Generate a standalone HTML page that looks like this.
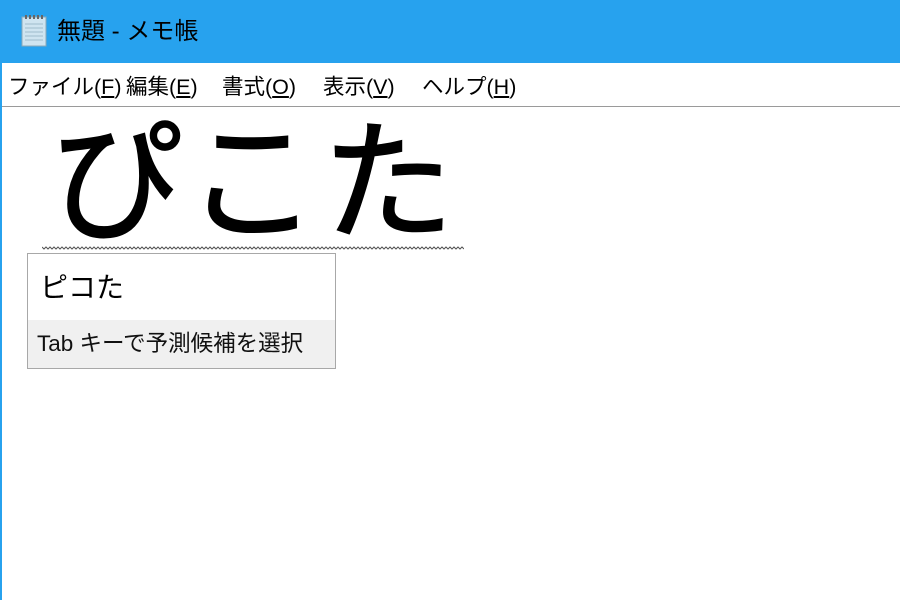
<!DOCTYPE html>
<html><head><meta charset="utf-8"><style>
html,body{margin:0;padding:0;width:900px;height:600px;overflow:hidden;background:#fff;font-family:"Liberation Sans","Noto Sans CJK JP",sans-serif;}
.title{position:absolute;left:0;top:0;width:900px;height:63px;background:#27a2ee;}
.title .t{position:absolute;left:57px;top:16px;font-size:24px;color:#000;line-height:32px;}
.menu{position:absolute;left:0;top:63px;width:900px;height:43px;background:#fff;border-bottom:1px solid #9a9a9a;}
.menu span{position:absolute;top:9px;font-size:21.5px;line-height:30px;color:#000;white-space:nowrap;}
.edge{position:absolute;left:0;top:63px;width:2px;height:537px;background:#27a2ee;}
.big{position:absolute;left:50px;top:104px;font-size:132px;line-height:160px;letter-spacing:4px;color:#000;font-weight:normal;-webkit-text-stroke:1.5px #000;white-space:nowrap;}
.wave{position:absolute;left:42px;top:246px;width:422px;height:4px;}
.pop{position:absolute;left:27px;top:253px;width:307px;height:114px;border:1px solid #a8a8a8;background:#fff;}
.pop .c{position:absolute;left:12px;top:16px;font-size:28px;line-height:36px;}
.pop .h{position:absolute;left:0;top:66px;width:307px;height:48px;background:#f0f0f0;}
.pop .h span{position:absolute;left:9px;top:9px;font-size:22.5px;line-height:30px;color:#111;white-space:nowrap;}
</style></head><body>
<div class="title">
<svg style="position:absolute;left:17px;top:14px" width="34" height="34" viewBox="0 0 34 34">
<rect x="5" y="3" width="24" height="29" fill="#cfe4f0" stroke="#8aa8b8"/>
<g stroke="#9fbccc"><line x1="8" y1="10" x2="26" y2="10"/><line x1="8" y1="14" x2="26" y2="14"/><line x1="8" y1="18" x2="26" y2="18"/><line x1="8" y1="22" x2="26" y2="22"/><line x1="8" y1="26" x2="26" y2="26"/></g>
<g fill="#666"><rect x="8" y="1" width="2" height="4"/><rect x="12" y="1" width="2" height="4"/><rect x="16" y="1" width="2" height="4"/><rect x="20" y="1" width="2" height="4"/><rect x="24" y="1" width="2" height="4"/></g>
</svg>
<div class="t">無題 - メモ帳</div></div>
<div class="menu">
<span style="left:8px">ファイル(<u>F</u>)</span>
<span style="left:126px">編集(<u>E</u>)</span>
<span style="left:222px">書式(<u>O</u>)</span>
<span style="left:323px">表示(<u>V</u>)</span>
<span style="left:422px">ヘルプ(<u>H</u>)</span>
</div>
<div class="edge"></div>
<div class="big">ぴこた</div>
<svg class="wave" viewBox="0 0 422 4" preserveAspectRatio="none"><polyline fill="none" stroke="#555" stroke-width="1" points="0,1 2,3 4,1 6,3 8,1 10,3 12,1 14,3 16,1 18,3 20,1 22,3 24,1 26,3 28,1 30,3 32,1 34,3 36,1 38,3 40,1 42,3 44,1 46,3 48,1 50,3 52,1 54,3 56,1 58,3 60,1 62,3 64,1 66,3 68,1 70,3 72,1 74,3 76,1 78,3 80,1 82,3 84,1 86,3 88,1 90,3 92,1 94,3 96,1 98,3 100,1 102,3 104,1 106,3 108,1 110,3 112,1 114,3 116,1 118,3 120,1 122,3 124,1 126,3 128,1 130,3 132,1 134,3 136,1 138,3 140,1 142,3 144,1 146,3 148,1 150,3 152,1 154,3 156,1 158,3 160,1 162,3 164,1 166,3 168,1 170,3 172,1 174,3 176,1 178,3 180,1 182,3 184,1 186,3 188,1 190,3 192,1 194,3 196,1 198,3 200,1 202,3 204,1 206,3 208,1 210,3 212,1 214,3 216,1 218,3 220,1 222,3 224,1 226,3 228,1 230,3 232,1 234,3 236,1 238,3 240,1 242,3 244,1 246,3 248,1 250,3 252,1 254,3 256,1 258,3 260,1 262,3 264,1 266,3 268,1 270,3 272,1 274,3 276,1 278,3 280,1 282,3 284,1 286,3 288,1 290,3 292,1 294,3 296,1 298,3 300,1 302,3 304,1 306,3 308,1 310,3 312,1 314,3 316,1 318,3 320,1 322,3 324,1 326,3 328,1 330,3 332,1 334,3 336,1 338,3 340,1 342,3 344,1 346,3 348,1 350,3 352,1 354,3 356,1 358,3 360,1 362,3 364,1 366,3 368,1 370,3 372,1 374,3 376,1 378,3 380,1 382,3 384,1 386,3 388,1 390,3 392,1 394,3 396,1 398,3 400,1 402,3 404,1 406,3 408,1 410,3 412,1 414,3 416,1 418,3 420,1 422,3"/></svg>
<div class="pop"><div class="c">ピコた</div><div class="h"><span>Tab キーで予測候補を選択</span></div></div>
</body></html>
